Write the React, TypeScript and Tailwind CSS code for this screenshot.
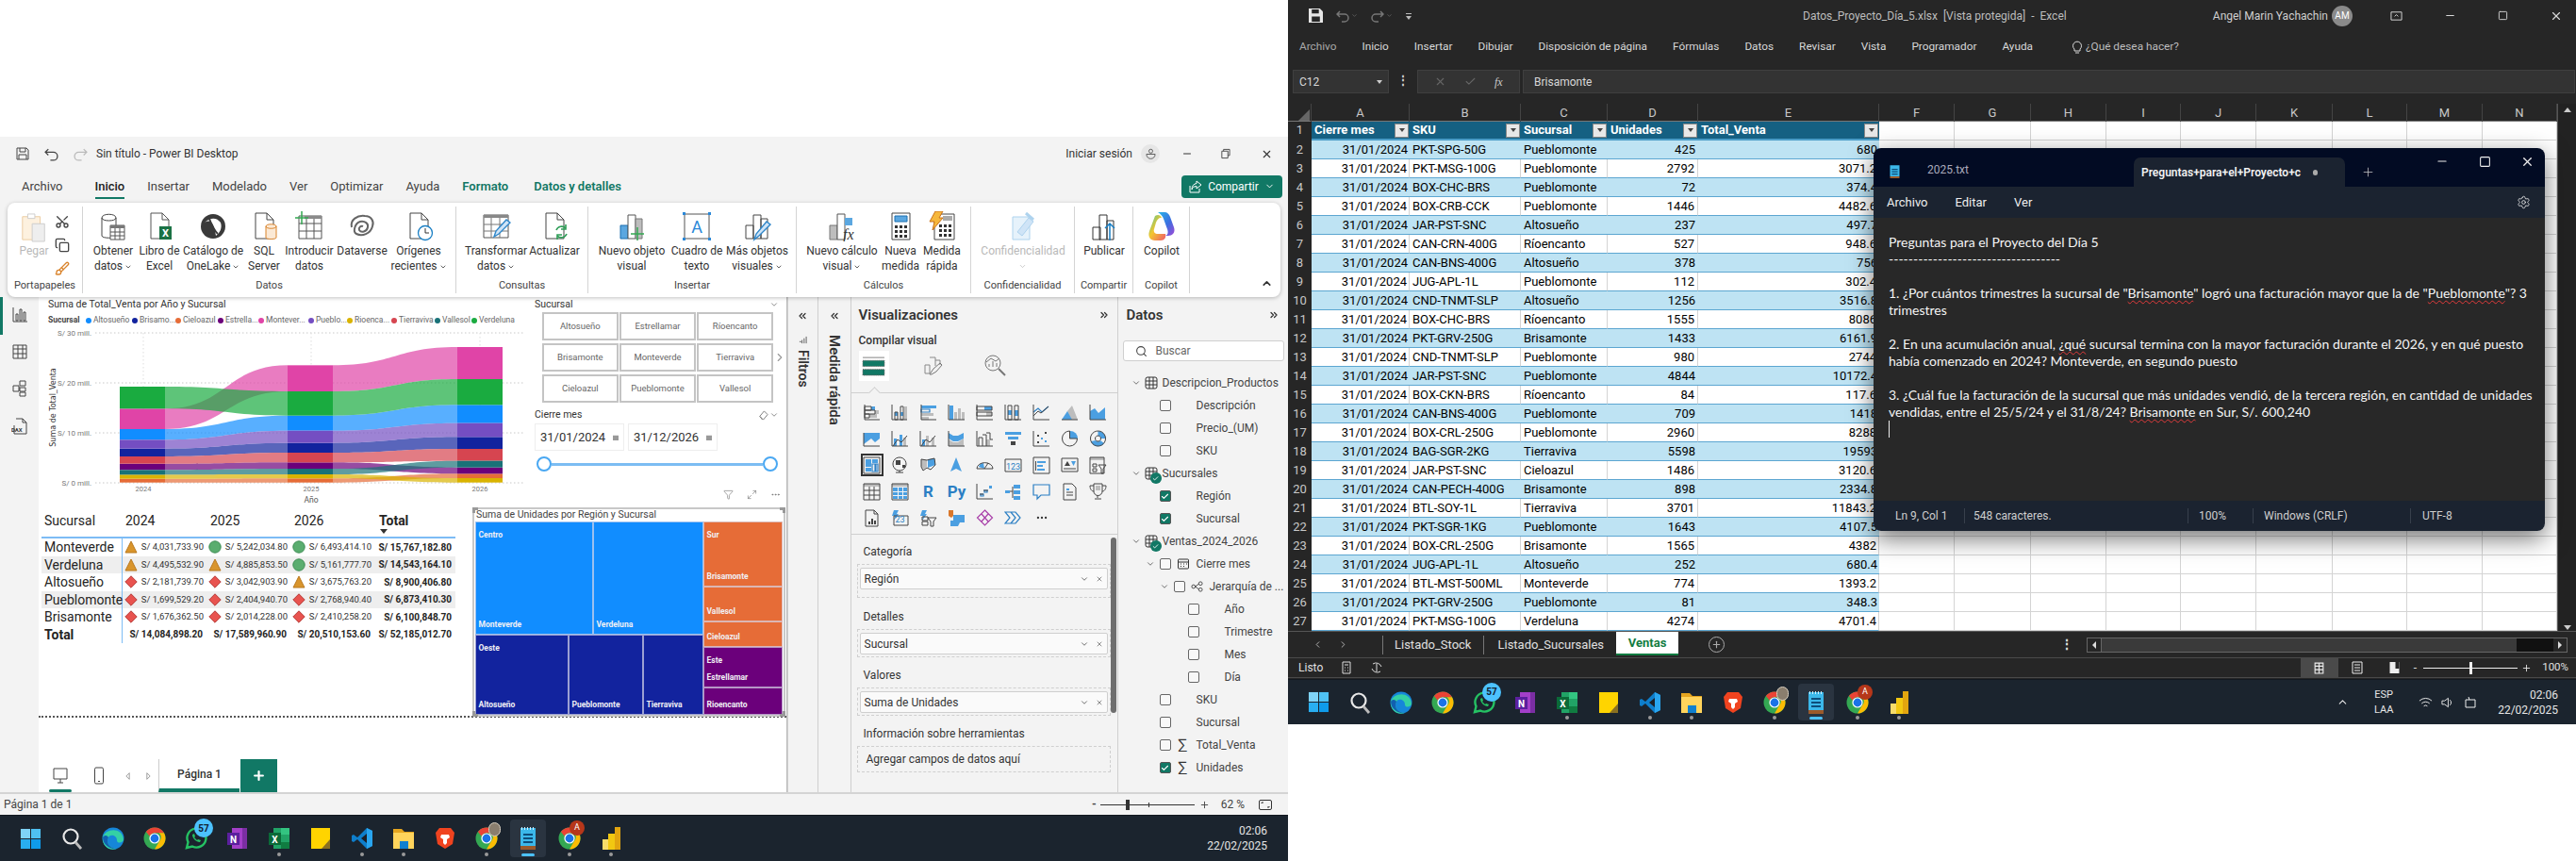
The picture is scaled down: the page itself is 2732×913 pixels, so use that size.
import React from 'react'
import { Scissors, Copy, Brush, X, Minus, Square, Plus, ChevronDown, ChevronRight, ChevronUp, ChevronsLeft, ChevronsRight, Search, Settings, Check, Filter, MoreHorizontal, Maximize2 } from 'lucide-react'

const Chev = () => <ChevronDown size={8} strokeWidth={2.5} className="inline ml-[2px] text-[#444]" />

/* ---------- ribbon icons ---------- */
const DOC = 'M7 2h12l7 7v20H7zM19 2v7h7'
const Ic = ({ children }: { children: React.ReactNode }) => <svg viewBox="0 0 32 32" className="w-[32px] h-[32px]" fill="none">{children}</svg>

const RIcons: Record<string, React.ReactNode> = {
  get: <Ic><path d="M4 7c0-5 15-5 15 0v19c0 3-15 3-15 0z" stroke="#444" fill="#fff" /><path d="M4 7c0 4 15 4 15 0" stroke="#444" /><path d="M13 15h15v15H13z" fill="#fff" stroke="#555" /><path d="M13 15h15v3H13z" fill="#777" /><path d="M18 18v12M23 18v12M13 22h15M13 26h15" stroke="#555" /></Ic>,
  excel: <Ic><path d={DOC} stroke="#555" fill="#fff" /><path d="M16 16h13v14H16z" fill="#1b7245" /><text x="22.5" y="27" fontSize="11" fontWeight="700" fill="#fff" textAnchor="middle">X</text></Ic>,
  lake: <Ic><circle cx="16" cy="16" r="13" fill="#3a3a3a" /><path d="M7 12c6-4 10 0 12 14 4-3 7-8 5-14-4-5-10-6-17 0" fill="#fff" /><path d="M12 8c3 8 5 12 9 16" stroke="#3a3a3a" strokeWidth="2" /></Ic>,
  sql: <Ic><path d={DOC} stroke="#444" fill="#fff" /><path d="M18 16c0-3 11-3 11 0v12c0 2-11 2-11 0z" fill="#fbe9d5" stroke="#d9832b" /><path d="M18 16c0 3 11 3 11 0" stroke="#d9832b" /></Ic>,
  enter: <Ic><path d="M5 5h24v24H5z" stroke="#555" /><path d="M11 5h18v3H11z" fill="#8a8a8a" /><path d="M13 8v21M21 8v21M5 13h24M5 21h24" stroke="#555" /><path d="M8 0v14M1 7h14" stroke="#33a852" strokeWidth="1.5" /></Ic>,
  verse: <Ic><path d="M5 17c-2-8 6-13 14-12 7 0 10 6 8 11-2 8-11 11-17 8C6 22 8 13 14 11c5-1 9 2 8 6-1 5-7 6-9 3-1-3 2-5 4-4" stroke="#666" strokeWidth="2" /></Ic>,
  recent: <Ic><path d={DOC} stroke="#444" fill="#fff" /><circle cx="23" cy="23" r="7.5" fill="#fff" stroke="#1a7fc4" strokeWidth="1.3" /><path d="M23 18v5h4" stroke="#333" /></Ic>,
  transform: <Ic><path d="M3 4h26v24H3z" stroke="#555" fill="#fff" /><path d="M3 4h26v3H3z" fill="#888" /><path d="M11 7v21M20 7v21M3 14h26M3 21h26" stroke="#777" /><path d="M14 27l2-6L27 9l4 3-12 12z" fill="#cfe4f7" stroke="#2e86c9" strokeWidth="1.4" /></Ic>,
  refresh: <Ic><path d={DOC} stroke="#444" fill="#fff" /><path d="M18 20a6 6 0 0 1 10-2M29 24a6 6 0 0 1-10 2" stroke="#2f9e58" strokeWidth="1.6" /><path d="M28 14v5h-5M19 30v-5h5" stroke="#2f9e58" strokeWidth="1.6" /></Ic>,
  visual: <Ic><path d="M4 15h8v14H4z" fill="#5ba7e0" stroke="#1a6fb0" /><path d="M12 4h8v25h-8z" fill="#fff" stroke="#555" /><path d="M20 8h7v21h-7z" fill="#bdbdbd" stroke="#777" /><path d="M22 17v14M15 24h14" stroke="#33a852" strokeWidth="1.5" /></Ic>,
  text: <Ic><path d="M3 3h26v26H3z" stroke="#555" fill="#fff" /><path d="M1 1h3v3H1zM28 1h3v3h-3zM1 28h3v3H1zM28 28h3v3h-3z" fill="#2b88d8" /><text x="16" y="23" fontSize="18" fill="#2b88d8" textAnchor="middle">A</text></Ic>,
  more: <Ic><path d="M4 15h8v14H4zM12 4h8v25h-8zM20 8h7v21h-7z" stroke="#444" fill="#fff" /><path d="M13 30l2-6L26 11l4 3-12 12z" fill="#cfe4f7" stroke="#2e86c9" strokeWidth="1.4" /></Ic>,
  calc: <Ic><path d="M3 15h8v15H3z" fill="#bdbdbd" stroke="#777" /><path d="M11 3h8v27h-8z" fill="#fff" stroke="#555" /><path d="M19 7h8v8h-8z" fill="#5ba7e0" /><text x="17" y="30" fontFamily="Liberation Serif" fontStyle="italic" fontSize="16" fill="#333">fx</text></Ic>,
  measure: <Ic><path d="M7 2h19v28H7z" stroke="#444" fill="#fff" /><path d="M10 5h13v6H10z" fill="#5ba7e0" stroke="#1a6fb0" /><path d="M10 15h3v3h-3zM15 15h3v3h-3zM20 15h3v3h-3zM10 20h3v3h-3zM15 20h3v3h-3zM20 20h3v3h-3zM10 25h3v3h-3zM15 25h3v3h-3zM20 25h3v3h-3z" fill="#333" /></Ic>,
  quick: <Ic><path d="M8 3h21v27H8z" stroke="#444" fill="#fff" /><path d="M17 5h10v5H17z" fill="#aaa" /><path d="M13 14h3v3h-3zM18 14h3v3h-3zM23 14h3v3h-3zM13 19h3v3h-3zM18 19h3v3h-3zM23 19h3v3h-3zM13 24h3v3h-3zM18 24h3v3h-3zM23 24h3v3h-3z" fill="#333" /><path d="M9 0h8l-4 7h4L6 20l2-9H3z" fill="#f6b73c" stroke="#c9711a" /></Ic>,
  conf: <Ic><path d="M5 6h18v24H5z" stroke="#aed3ee" fill="#e6f2fb" /><path d="M10 22l12-15 5 4-12 15z" fill="#cfe4f7" stroke="#aed3ee" /><path d="M19 2l8 7" stroke="#aed3ee" strokeWidth="3" /></Ic>,
  publish: <Ic><path d="M4 17h8v13H4zM11 4h8v26h-8zM19 10h7v20h-7z" stroke="#333" fill="#fff" rx="2" /><path d="M22 31V13M17 18l5-5 5 5" stroke="#1a7fc4" strokeWidth="1.5" /></Ic>,
  copilot: (
    <Ic>
      <defs>
        <linearGradient id="cpa" x1="0" y1="0" x2="1" y2="1"><stop offset="0" stopColor="#27b5e8" /><stop offset=".55" stopColor="#3c6fe0" /><stop offset="1" stopColor="#a04ad6" /></linearGradient>
        <linearGradient id="cpb" x1="0" y1="0" x2="1" y2="1"><stop offset="0" stopColor="#3fc8a0" /><stop offset=".45" stopColor="#f3c62e" /><stop offset="1" stopColor="#ef5a6c" /></linearGradient>
      </defs>
      <path d="M12 1h7c3 0 5 2 6 5l4 11c2 6-2 9-6 9h-3c3-1 3-4 2-7l-4-11c-1-3-3-5-6-7z" fill="url(#cpa)" />
      <path d="M9 5c3-2 6-1 7 2l-1 0c-2 0-4 2-5 5l-2 7c-1 3 1 5 4 5h8c1 4-1 7-5 7H9c-5 0-8-4-6-10z" fill="url(#cpb)" />
    </Ic>
  ),
}

const RibbonBtn = ({ icon, label, w, faded }: { icon: string; label: React.ReactNode; w: string; faded?: boolean }) => (
  <div className={`${w} flex flex-col items-center pt-[5px] shrink-0`}>
    {RIcons[icon]}
    <div className={`mt-[2px] text-center leading-[16px] text-[12px] whitespace-nowrap ${faded ? 'text-[#b9b9b9]' : 'text-[#333]'}`}>{label}</div>
  </div>
)

const RibbonGroup = ({ title, w, pl, children }: { title: string; w: string; pl: string; children: React.ReactNode }) => (
  <div className={`${w} h-[92px] shrink-0 flex flex-col border-r border-[#d4d4d4]`}>
    <div className={`flex-1 flex ${pl}`}>{children}</div>
    <div className="h-[16px] leading-[16px] text-center text-[11px] text-[#444]">{title}</div>
  </div>
)

const Ribbon = () => (
  <div className="relative z-10 mx-[8px] h-[100px] w-[1350px] bg-white rounded-[8px] shadow-[0_1px_4px_rgba(0,0,0,.25)] flex py-[4px]">
    <RibbonGroup title="Portapapeles" w="w-[80px]" pl="pl-[8px]">
      <div className="w-[40px] flex flex-col items-center pt-[5px]">
        <svg viewBox="0 0 32 36" className="w-[30px] h-[34px]" fill="none"><path d="M3 6h20v26H3z" fill="#fdf1df" stroke="#eccb9f" /><path d="M9 3h8v5H9z" stroke="#ccc" fill="#fff" /><path d="M14 14h14v20H14z" fill="#eee" stroke="#ccc" /></svg>
        <div className="text-[12px] text-[#b9b9b9] leading-[16px] mt-0">Pegar</div>
      </div>
      <div className="flex flex-col items-center gap-[9px] pt-[8px] pl-[2px]">
        <Scissors size={16} className="text-[#444] -rotate-90" />
        <Copy size={16} className="text-[#444]" />
        <Brush size={16} className="text-[#d9832b]" />
      </div>
    </RibbonGroup>
    <RibbonGroup title="Datos" w="w-[396px]" pl="pl-[7px]">
      <RibbonBtn icon="get" w="w-[50px]" label={<>Obtener<br />datos<Chev /></>} />
      <RibbonBtn icon="excel" w="w-[48px]" label={<>Libro de<br />Excel</>} />
      <RibbonBtn icon="lake" w="w-[66px]" label={<>Catálogo de<br />OneLake<Chev /></>} />
      <RibbonBtn icon="sql" w="w-[42px]" label={<>SQL<br />Server</>} />
      <RibbonBtn icon="enter" w="w-[54px]" label={<>Introducir<br />datos</>} />
      <RibbonBtn icon="verse" w="w-[58px]" label="Dataverse" />
      <RibbonBtn icon="recent" w="w-[62px]" label={<>Orígenes<br />recientes<Chev /></>} />
    </RibbonGroup>
    <RibbonGroup title="Consultas" w="w-[140px]" pl="pl-[10px]">
      <RibbonBtn icon="transform" w="w-[64px]" label={<>Transformar<br />datos<Chev /></>} />
      <RibbonBtn icon="refresh" w="w-[60px]" label="Actualizar" />
    </RibbonGroup>
    <RibbonGroup title="Insertar" w="w-[221px]" pl="pl-[6px]">
      <RibbonBtn icon="visual" w="w-[80px]" label={<>Nuevo objeto<br />visual</>} />
      <RibbonBtn icon="text" w="w-[58px]" label={<>Cuadro de<br />texto</>} />
      <RibbonBtn icon="more" w="w-[70px]" label={<>Más objetos<br />visuales<Chev /></>} />
    </RibbonGroup>
    <RibbonGroup title="Cálculos" w="w-[185px]" pl="pl-[6px]">
      <RibbonBtn icon="calc" w="w-[84px]" label={<>Nuevo cálculo<br />visual<Chev /></>} />
      <RibbonBtn icon="measure" w="w-[40px]" label={<>Nueva<br />medida</>} />
      <RibbonBtn icon="quick" w="w-[48px]" label={<>Medida<br />rápida</>} />
    </RibbonGroup>
    <RibbonGroup title="Confidencialidad" w="w-[110px]" pl="pl-[0px]">
      <RibbonBtn icon="conf" faded w="w-[110px]" label={<>Confidencialidad<br /><ChevronDown size={9} className="inline text-[#bbb]" /></>} />
    </RibbonGroup>
    <RibbonGroup title="Compartir" w="w-[62px]" pl="pl-[0px]">
      <RibbonBtn icon="publish" w="w-[62px]" label="Publicar" />
    </RibbonGroup>
    <RibbonGroup title="Copilot" w="w-[60px]" pl="pl-[0px]">
      <RibbonBtn icon="copilot" w="w-[60px]" label="Copilot" />
    </RibbonGroup>
    <div className="flex-1 flex items-end justify-end pr-[8px] pb-[4px]"><ChevronUp size={13} strokeWidth={3} className="text-[#333]" /></div>
  </div>
)

/* ---------- sankey chart ---------- */
const COLORS: Record<string, string> = {
  Altosueño: '#118DFF', Brisamonte: '#12239E', Cieloazul: '#E66C37', Estrellamar: '#6B007B', Monteverde: '#E044A7',
  Pueblomonte: '#744EC2', Rioencanto: '#D9B300', Tierraviva: '#D64550', Vallesol: '#197278', Verdeluna: '#1AAB40',
}
const BANDS: [string, number[][]][] = [
  ['Altosueño', [[435, 469], [392, 440], [358, 416]]],
  ['Brisamonte', [[497, 522], [479, 510], [460, 498]]],
  ['Cieloazul', [[593, 605], [592, 605], [577, 591]]],
  ['Estrellamar', [[545, 565], [541, 561], [557, 577]]],
  ['Monteverde', [[370, 435], [232, 315], [174, 276]]],
  ['Pueblomonte', [[469, 497], [440, 479], [416, 460]]],
  ['Rioencanto', [[580, 593], [579, 592], [591, 605]]],
  ['Tierraviva', [[522, 545], [510, 541], [498, 536]]],
  ['Vallesol', [[565, 580], [561, 579], [536, 557]]],
  ['Verdeluna', [[300, 370], [315, 392], [276, 358]]],
]
const COLS = [[127, 175], [305, 353], [485, 533]]
const yy = (v: number) => 310 + v / 3

const Sankey = () => (
  <svg viewBox="41 345 520 191" className="w-[520px] h-[191px]" fill="none">
    {[353, 406, 459, 512].map((y, i) => (
      <g key={y}>
        <path d={`M101 ${y}H557`} stroke="#c8c8c8" strokeDasharray="1.5 2.5" />
        <text x="97" y={y + 3} fontSize="8" fill="#777" textAnchor="end">{['S/ 30 mill.', 'S/ 20 mill.', 'S/ 10 mill.', 'S/ 0 mill.'][i]}</text>
      </g>
    ))}
    {[152, 330, 509].map((x) => <path key={x} d={`M${x} 353V512`} stroke="#ddd" strokeDasharray="1.5 2.5" />)}
    {BANDS.map(([name, b]) => (
      <g key={name}>
        {[0, 1].map((i) => {
          const x1 = COLS[i][1], x2 = COLS[i + 1][0], m = (x1 + x2) / 2
          const [a1, a2] = b[i].map(yy), [c1, c2] = b[i + 1].map(yy)
          return <path key={i} d={`M${x1} ${a1}C${m} ${a1} ${m} ${c1} ${x2} ${c1}V${c2}C${m} ${c2} ${m} ${a2} ${x1} ${a2}Z`} fill={COLORS[name]} fillOpacity=".7" />
        })}
        {b.map((r, i) => <rect key={i} x={COLS[i][0]} y={yy(r[0])} width={COLS[i][1] - COLS[i][0]} height={(r[1] - r[0]) / 3} fill={COLORS[name]} />)}
      </g>
    ))}
    {['2024', '2025', '2026'].map((t, i) => <text key={t} x={[152, 330, 509][i]} y="521" fontSize="7.5" fill="#777" textAnchor="middle">{t}</text>)}
    <text x="330" y="533" fontSize="8.5" fill="#555" textAnchor="middle">Año</text>
    <text transform="translate(59 432) rotate(-90)" fontSize="8" fill="#333" textAnchor="middle" fontFamily="DejaVu Sans">Suma de Total_Venta</text>
  </svg>
)

const LEGEND: [string, string, string][] = [
  ['Altosueño', 'Altosueño', 'w-[49px]'], ['Brisamonte', 'Brisamo...', 'w-[46px]'], ['Cieloazul', 'Cieloazul', 'w-[45px]'],
  ['Estrellamar', 'Estrella...', 'w-[43px]'], ['Monteverde', 'Montever...', 'w-[53px]'], ['Pueblomonte', 'Pueblo...', 'w-[41px]'],
  ['Rioencanto', 'Rioenca...', 'w-[47px]'], ['Tierraviva', 'Tierraviva', 'w-[46px]'], ['Vallesol', 'Vallesol', 'w-[39px]'], ['Verdeluna', 'Verdeluna', 'w-[46px]'],
]

const ChartBlock = () => (
  <div className="w-[520px] shrink-0">
    <div className="h-[30px] pl-[10px]">
      <div className="h-[15px] leading-[15px] text-[10.5px] text-[#333]">Suma de Total_Venta por Año y Sucursal</div>
      <div className="flex items-center h-[15px] mt-[2px] text-[8.5px] text-[#666]">
        <span className="w-[40px] font-bold text-[#444]">Sucursal</span>
        {LEGEND.map(([k, t, w]) => (
          <span key={k} className={`${w} flex items-center gap-[2px] whitespace-nowrap`}>
            <i className={`w-[6px] h-[6px] rounded-full shrink-0 ${k === 'Altosueño' ? 'bg-[#118DFF]' : k === 'Brisamonte' ? 'bg-[#12239E]' : k === 'Cieloazul' ? 'bg-[#E66C37]' : k === 'Estrellamar' ? 'bg-[#6B007B]' : k === 'Monteverde' ? 'bg-[#E044A7]' : k === 'Pueblomonte' ? 'bg-[#744EC2]' : k === 'Rioencanto' ? 'bg-[#D9B300]' : k === 'Tierraviva' ? 'bg-[#D64550]' : k === 'Vallesol' ? 'bg-[#197278]' : 'bg-[#1AAB40]'}`} />
            {t}
          </span>
        ))}
      </div>
    </div>
    <Sankey />
  </div>
)

const Slicers = () => (
  <div className="w-[273px] pl-[6px] text-[#555]">
    <div className="h-[16px] flex items-center justify-between pr-[8px] text-[10.5px] text-[#333]">Sucursal <ChevronDown size={10} className="text-[#777]" /></div>
    <div className="flex items-center">
      <div className="ml-[8px] w-[245px] grid grid-cols-3 gap-[1.5px] gap-y-[3px]">
        {['Altosueño', 'Estrellamar', 'Ríoencanto', 'Brisamonte', 'Monteverde', 'Tierraviva', 'Cieloazul', 'Pueblomonte', 'Vallesol'].map((t) => (
          <div key={t} className="h-[30px] border-2 border-[#c4c4c4] flex items-center justify-center text-[9.5px] text-[#666]">{t}</div>
        ))}
      </div>
      <ChevronRight size={14} className="text-[#999] ml-0" />
    </div>
    <div className="mt-[5px] h-[16px] flex items-center justify-between pr-[8px] text-[10.5px] text-[#333]">
      Cierre mes
      <span className="flex items-center gap-[1px] text-[#777]">
        <svg viewBox="0 0 12 12" className="w-[11px] h-[11px]" fill="none" stroke="#777"><path d="M7 1l4 4-5 6-4-4zM2 7l3 4" /></svg>
        <ChevronDown size={10} />
      </span>
    </div>
    <div className="flex gap-[4px] mt-[1px]">
      {['31/01/2024', '31/12/2026'].map((d) => (
        <div key={d} className="w-[95px] h-[29px] border border-[#eee] flex items-center justify-between px-[5px] text-[13px] text-[#333]">
          {d}
          <svg viewBox="0 0 8 8" className="w-[6px] h-[6px]"><path d="M0 1h8v7H0z" fill="#999" /></svg>
        </div>
      ))}
    </div>
    <div className="mt-[6px] flex items-center ml-[2px] w-[256px]">
      <i className="w-[16px] h-[16px] rounded-full border-2 border-[#4aa8f2] bg-white shrink-0" />
      <i className="flex-1 h-[3px] bg-[#7cbdf3]" />
      <i className="w-[16px] h-[16px] rounded-full border-2 border-[#4aa8f2] bg-white shrink-0" />
    </div>
    <div className="mt-[19px] flex justify-end items-center gap-[14px] pr-[6px] text-[#777]">
      <Filter size={11} strokeWidth={1.4} />
      <Maximize2 size={11} strokeWidth={1.4} />
      <MoreHorizontal size={11} />
    </div>
  </div>
)

/* ---------- matrix + treemap ---------- */
type Mark = 't' | 'c' | 'd'
const MarkIcon = ({ m }: { m: Mark }) => (
  <svg viewBox="0 0 14 14" className="w-[14px] h-[14px] shrink-0">
    {m === 't' && <path d="M7 1l6 12H1z" fill="#d9952c" stroke="#b9791f" />}
    {m === 'c' && <circle cx="7" cy="7" r="6.2" fill="#5aad6f" stroke="#3f8d55" />}
    {m === 'd' && <path d="M7 .8L13.2 7 7 13.2.8 7z" fill="#e8534f" stroke="#b53a37" />}
  </svg>
)
const MATRIX: [string, [Mark, string][], string][] = [
  ['Monteverde', [['t', '4,031,733.90'], ['c', '5,242,034.80'], ['c', '6,493,414.10']], '15,767,182.80'],
  ['Verdeluna', [['t', '4,495,532.90'], ['t', '4,885,853.50'], ['c', '5,161,777.70']], '14,543,164.10'],
  ['Altosueño', [['d', '2,181,739.70'], ['d', '3,042,903.90'], ['t', '3,675,763.20']], '8,900,406.80'],
  ['Pueblomonte', [['d', '1,699,529.20'], ['d', '2,404,940.70'], ['d', '2,768,940.40']], '6,873,410.30'],
  ['Brisamonte', [['d', '1,676,362.50'], ['d', '2,014,228.00'], ['d', '2,410,258.20']], '6,100,848.70'],
]
const Matrix = () => (
  <div className="w-[439px] ml-[3px] mt-[2px] shrink-0 text-[#252423]">
    <div className="h-[31px] grid grid-cols-[86px_89px_89px_89px_86px] text-[14px] pt-[5px] leading-[18px]">
      <span className="pl-[3px]">Sucursal</span><span className="pl-[3px]">2024</span><span className="pl-[4px]">2025</span><span className="pl-[4px]">2026</span>
      <span className="pl-[5px] font-bold flex flex-col">Total<i className="ml-[1px] w-0 h-0 border-x-[4px] border-x-transparent border-t-[5px] border-t-[#333]" /></span>
    </div>
    <div className="border-t-2 border-[#7dbcf5]">
      {MATRIX.map(([name, vals, tot], i) => (
        <div key={name} className={`h-[18.5px] grid grid-cols-[86px_89px_89px_89px_86px] items-center ${i % 2 ? 'bg-[#eeeeee]' : ''}`}>
          <span className="pl-[3px] text-[14px] leading-[18px] border-r border-[#7dbcf5] h-full whitespace-nowrap">{name}</span>
          {vals.map(([m, v]) => (
            <span key={v} className="flex items-center justify-between pl-[2px] pr-[3px] text-[9.5px] whitespace-nowrap text-[#333]"><MarkIcon m={m} />S/ {v}</span>
          ))}
          <span className="text-right pr-[4px] text-[10px] font-bold whitespace-nowrap">S/ {tot}</span>
        </div>
      ))}
      <div className="h-[18.5px] grid grid-cols-[86px_89px_89px_89px_86px] items-center font-bold text-[10px]">
        <span className="pl-[3px] text-[14px] leading-[18px] border-r border-[#7dbcf5] h-full">Total</span>
        {['14,084,898.20', '17,589,960.90', '20,510,153.60', '52,185,012.70'].map((v) => <span key={v} className="text-right pr-[4px] whitespace-nowrap">S/ {v}</span>)}
      </div>
    </div>
  </div>
)

const Cell = ({ c, head, name, cls }: { c: string; head?: string; name: string; cls: string }) => (
  <div className={`${c} ${cls} border border-[#d6d6e8]/70 flex flex-col justify-between px-[2.5px] py-[1px] text-[8.5px] font-bold text-[#f0f0f5] whitespace-nowrap`}>
    <span className="mt-[6px]">{head ?? ''}</span><span className="mb-[2px]">{name}</span>
  </div>
)
const Treemap = () => (
  <div className="relative w-[332px] h-[222px] mt-[2px] ml-[18px] border-2 border-[#c8c8c8] shrink-0">
    <i className="absolute -left-[2px] -top-[2px] w-[6px] h-[6px] border-l-[3px] border-t-[3px] border-[#999]" />
    <i className="absolute -right-[2px] -top-[2px] w-[6px] h-[6px] border-r-[3px] border-t-[3px] border-[#999]" />
    <i className="absolute -left-[2px] -bottom-[2px] w-[6px] h-[6px] border-l-[3px] border-b-[3px] border-[#999]" />
    <i className="absolute -right-[2px] -bottom-[2px] w-[6px] h-[6px] border-r-[3px] border-b-[3px] border-[#999]" />
    <div className="h-[13px] pl-[2px] leading-[12px] text-[10.5px] text-[#444] whitespace-nowrap">Suma de Unidades por Región y Sucursal</div>
    <div className="flex h-[205px] mx-[1px]">
      <div className="w-[242px] flex flex-col">
        <div className="h-[120px] flex">
          <Cell c="bg-[#118DFF]" cls="w-[125px]" head="Centro" name="Monteverde" />
          <Cell c="bg-[#118DFF]" cls="flex-1" name="Verdeluna" />
        </div>
        <div className="flex-1 flex">
          <Cell c="bg-[#12239E]" cls="w-[99px]" head="Oeste" name="Altosueño" />
          <Cell c="bg-[#12239E]" cls="w-[79px]" name="Pueblomonte" />
          <Cell c="bg-[#12239E]" cls="flex-1" name="Tierraviva" />
        </div>
      </div>
      <div className="flex-1 flex flex-col">
        <Cell c="bg-[#E66C37]" cls="h-[69px]" head="Sur" name="Brisamonte" />
        <Cell c="bg-[#E66C37]" cls="h-[37px]" name="Vallesol" />
        <Cell c="bg-[#E66C37]" cls="h-[27px]" name="Cieloazul" />
        <Cell c="bg-[#6B007B]" cls="h-[43px]" head="Este" name="Estrellamar" />
        <Cell c="bg-[#6B007B]" cls="flex-1" name="Rioencanto" />
      </div>
    </div>
  </div>
)

/* ---------- viz gallery ---------- */
type V = { s?: string; b?: string; g?: string; l?: string; t?: string; c?: string }
const VIZ: V[] = [
  { s: 'M2 1v16h16M2 3h7v4H2zM2 7h11v4H2zM2 11h5v4H2z', b: 'M9 3h4v4H9z', g: 'M13 7h4v4h-4zM7 11h8v4H7z' },
  { s: 'M1 1v16h16M4 9h3v8H4zM10 3h3v14h-3z', b: 'M4 9h3v4H4zM10 9h3v4h-3z', g: 'M14 3h3v14h-3z' },
  { s: 'M2 1v16h16', g: 'M2 10h13v3H2zM2 14h8v3H2z', b: 'M2 2h16v3H2z', l: 'M2 6h9v3H2z' },
  { s: 'M1 1v16h17', b: 'M2 2h4v15H2z', g: 'M7 9h3v8H7zM11 5h3v12h-3zM15 9h3v8h-3z' },
  { s: 'M1 1v16h17M1 3h16v4H1zM1 9h16v4H1z', b: 'M9 3h8v4H9z', g: 'M11 9h6v4h-6z' },
  { s: 'M1 1v16h17M4 2h4v15H4zM11 2h4v15h-4z', b: 'M4 7h4v5H4zM11 7h4v6h-4z' },
  { s: 'M1 1v16h17M1 13l5-5 3 2 8-7', l: 'M1 9l5-4 4 4 7-6' },
  { s: 'M1 17h17', b: 'M1 17l6-9 5 9z', g: 'M7 8l5-6 6 15H11z' },
  { s: 'M1 1v16h17', b: 'M1 8l5-3 4 5 7-6v13H1z' },
  { s: 'M1 3v14h17', b: 'M1 3h17v6l-5 4-4-4-8 6z' },
  { s: 'M1 1v16h17M2 17l5-7 4 3 6-7', b: 'M3 9h3v8H3zM9 5h3v12H9z', g: 'M13 8h3v9h-3z' },
  { s: 'M1 1v16h17M2 17l5-7 4 3 6-7', b: 'M3 10h3v7H3z', g: 'M7 6h3v11H7zM13 8h3v9h-3z' },
  { b: 'M1 3l5 3 5 0 6-3v6l-6 3-5 0-5-3z', g: 'M1 10l5 3h5l6-4v8H1z', s: 'M1 1v16h17' },
  { s: 'M1 1v16h17M3 17V8h4v9M7 5h4v12M11 3h4v7h3', g: 'M11 10h4v7h-4z' },
  { b: 'M1 2h17v3H1zM4 7h11v3H4z', c: 'M7 12h5v4H7z' },
  { s: 'M1 1v16h17', c: 'M5 5h2v2H5zM13 2h2v2h-2zM5 12h2v2H5z', b: 'M9 8h2v2H9zM13 11h2v2h-2z' },
  { s: 'M9.5 1a8 8 0 1 0 8 8h-8z', b: 'M10 1v8h8a8 8 0 0 0-8-8z' },
  { s: 'M9.5 1a8 8 0 1 0 .01 0zM9.5 6a3 3 0 1 0 .01 0z', b: 'M9.5 1a8 8 0 0 1 8 8h-5a3 3 0 0 0-3-3zM2 12a8 8 0 0 0 14 2l-4-3a3 3 0 0 1-5 0z' },
  { s: 'M1 1h17v17H1z', b: 'M3 3h6v8H3zM3 12h6v4H3zM10 3h6v4h-6z', l: 'M10 8h3v8h-3zM14 8h2v8h-2z' },
  { s: 'M9 1a7 7 0 1 1-.01 0zM5 17h8M9 15v2', c: 'M5 4h5v5H5zM12 9h3v3h-3z' },
  { g: 'M2 3l6 1v7l-4 3-2-4z', b: 'M9 3l7-1 1 7-8 3z', s: 'M2 3l6 1 8-2 1 7-5 5-4-2-4 3-2-4z' },
  { b: 'M9 1l6 15-6-3-6 3z' },
  { s: 'M1 13a8 6 0 0 1 17 0zM9 13l4-6', b: 'M3 11a6 5 0 0 1 5-4l1 6z' },
  { s: 'M1 3h17v13H1z', t: '123' },
  { s: 'M1 1h17v17H1z', b: 'M5 5h9v2H5zM5 9h6v2H5zM5 13h8v2H5z', c: 'M3 5h1v10H3z' },
  { s: 'M1 2h17v14H1zM3 13h13', c: 'M4 10l3-5 3 5z', b: 'M11 5h5l-2.5 5z' },
  { s: 'M1 1h15v17H1zM4 8h4v3H4zM4 13h4v3H4zM10 9h8l-3 4v5h-2v-5z', g: 'M1 1h15v3H1z' },
  { s: 'M1 1h17v17H1zM7 4v14M12 4v14M1 8h17M1 13h17', g: 'M1 1h17v3H1z' },
  { s: 'M1 1h17v17H1z', b: 'M2 5h5v4H2zM8 5h4v4H8zM13 5h4v4h-4zM2 10h5v3H2zM8 10h4v3H8zM13 10h4v3h-4zM2 14h5v3H2zM8 14h4v3H8zM13 14h4v3h-4z', g: 'M1 1h17v3H1z' },
  { t: 'R' }, { t: 'Py' },
  { s: 'M1 1v16h17M4 12h4M8 8h5', l: 'M5 12h3v2H5zM9 8h3v2H9z', b: 'M14 3h3v3h-3z' },
  { b: 'M1 8h5v3H1zM10 2h7v4h-7zM10 8h7v4h-7zM10 14h7v4h-7z', s: 'M6 9h3M9 4v12' },
  { l: 'M1 2h17v11H9l-4 4v-4H1z' },
  { s: 'M3 1h9l4 4v13H3zM6 10h7M6 13h7', b: 'M6 6h3v2H6z' },
  { s: 'M5 1h9v8a4 4 0 0 1-9 0zM5 3H1c0 4 2 6 4 6M14 3h4c0 4-2 6-4 6M9 13v3M6 17h7', g: 'M7 3h5v5H7z' },
  { s: 'M3 1h9l4 4v13H3zM12 1v4h4', c: 'M6 13h2v3H6zM9 10h2v6H9zM12 12h2v4h-2z' },
  { s: 'M3 7h15v10H3z', t: '23', b: 'M3 1h5L6 5h2l-5 7 1-5H1z' },
  { s: 'M3 8h6v4H3zM3 13h6v4H3zM9 9h9l-3 4v5h-3v-5z', b: 'M3 1h5L6 5h2l-5 7 1-5H1z' },
  { b: 'M6 6h12v8h-5l-2 4H3v-6h3z', c: 'M1 1h5v6l-2 2-3-2z' },
  { l: 'M9.5 1l8 8-8 8-8-8zM6 5l7 8M13 5l-7 8' },
  { l: 'M1 3h11l5 6-5 6H1l5-6zM7 3l5 6-5 6' },
]
const VizIcon = ({ v, i }: { v: V; i: number }) => (
  <div className={`h-[28px] w-[30px] flex items-center justify-center ${i === 18 ? 'relative' : ''}`}>
    {i === 18 && <i className="absolute left-[3px] top-[2px] w-[24px] h-[24px] border-2 border-[#333]" />}
    {v.t === 'R' || v.t === 'Py' ? (
      <span className="text-[#2b7fc4] text-[17px] font-bold leading-none">{v.t}</span>
    ) : (
      <svg viewBox="0 0 19 19" className="w-[19px] h-[19px]" fill="none">
        {v.g && <path d={v.g} fill="#bdbdbd" />}
        {v.b && <path d={v.b} fill="#4b9fe1" />}
        {v.c && <path d={v.c} fill={i === 39 ? '#d9772b' : '#444'} />}
        {v.l && <path d={v.l} stroke={i === 40 ? '#a83fa8' : '#2b7fc4'} strokeWidth="1.2" />}
        {v.s && <path d={v.s} stroke="#444" />}
        {v.t && <text x="9.5" y="13.5" fontSize="9" fill="#2b7fc4" textAnchor="middle">{v.t}</text>}
      </svg>
    )}
  </div>
)

const Well = ({ label, value, h }: { label: string; value: string; h: string }) => (
  <>
    <div className="pl-[13px] h-[16px] leading-[16px] text-[12px] text-[#333]">{label}</div>
    <div className={`ml-[6px] mr-[7px] mt-[5px] ${h} border border-dashed border-[#cfcfcf] px-[2px] pt-[3px]`}>
      <div className="h-[23px] bg-[#fafafa] border border-[#cfcfcf] rounded-[2px] flex items-center justify-between px-[4px] text-[12px] text-[#333]">
        {value}
        <span className="flex items-center gap-[7px] text-[#555]"><ChevronDown size={10} /><X size={8} /></span>
      </div>
    </div>
  </>
)

const VizPane = () => (
  <div className="relative w-[284px] shrink-0 border-l border-r border-[#cfcfcf] bg-[#f3f3f3] text-[#333]">
    <div className="h-[38px] flex items-center justify-between pl-[8px] pr-[8px] text-[15px] font-semibold">Visualizaciones <ChevronsRight size={12} strokeWidth={2.5} /></div>
    <div className="h-[16px] pl-[8px] leading-[16px] text-[12px] font-medium">Compilar visual</div>
    <div className="relative h-[48px] border-b border-[#cfcfcf] flex pl-[8px] pt-[3px]">
      <div className="w-[32px] h-[32px] bg-white flex items-center justify-center">
        <svg viewBox="0 0 24 24" className="w-[25px] h-[25px]"><path d="M1 3h22" stroke="#888" /><path d="M1 6h22v6H1zM1 15h22v6H1z" fill="#117865" stroke="#666" strokeDasharray="1 1" /></svg>
      </div>
      <svg viewBox="0 0 24 24" className="ml-[35px] w-[24px] h-[24px] mt-[3px]" fill="none" stroke="#888"><path d="M3 12h5v9H3zM8 4h6v9M14 7h5v5" /><path d="M8 22l4-6 7-6 2 2-6 7-5 3z" stroke="#777" /></svg>
      <svg viewBox="0 0 24 24" className="ml-[41px] w-[24px] h-[24px] mt-[3px]" fill="none" stroke="#777"><circle cx="10" cy="10" r="8" /><path d="M16 16l7 7" strokeWidth="2" /><path d="M6 14v-3M10 14V8M14 14v-4M3 9l5-4 5 3 4-3" /></svg>
      <i className="absolute left-[20px] -bottom-[5px] w-[9px] h-[9px] rotate-45 bg-[#f3f3f3] border-l border-t border-[#cfcfcf]" />
    </div>
    <div className="pl-[7px] pt-[6px] h-[150px] border-b border-[#cfcfcf]">
      <div className="grid grid-cols-[repeat(9,30px)]">
        {VIZ.map((v, i) => <VizIcon key={i} v={v} i={i} />)}
        <div className="h-[28px] flex items-center justify-center"><MoreHorizontal size={14} className="text-[#333]" /></div>
      </div>
    </div>
    <div className="mt-[10px]" />
    <Well label="Categoría" value="Región" h="h-[36px]" />
    <div className="mt-[12px]" />
    <Well label="Detalles" value="Sucursal" h="h-[30px]" />
    <div className="mt-[11px]" />
    <Well label="Valores" value="Suma de Unidades" h="h-[30px]" />
    <div className="mt-[11px]" />
    <div className="pl-[13px] h-[16px] leading-[16px] text-[12px]">Información sobre herramientas</div>
    <div className="ml-[6px] mr-[7px] mt-[5px] h-[28px] border border-dashed border-[#cfcfcf] pl-[9px] flex items-center text-[12px]">Agregar campos de datos aquí</div>
    <i className="absolute right-[1px] top-[255px] w-[6px] h-[186px] rounded-full bg-[#6e6e6e]" />
  </div>
)

/* ---------- data tree ---------- */
const Box = ({ on }: { on?: boolean }) => on
  ? <span className="w-[12px] h-[12px] shrink-0 rounded-[2px] bg-[#117865] border border-[#555] flex items-center justify-center"><Check size={9} strokeWidth={3} className="text-white" /></span>
  : <span className="w-[12px] h-[12px] shrink-0 rounded-[2px] border border-[#666] bg-[#f8f8f8]" />

const TableRow = ({ t, ok }: { t: string; ok?: boolean }) => (
  <div className="h-[24px] pl-[14px] flex items-center">
    <ChevronDown size={10} className="text-[#555]" />
    <span className="relative ml-[4px] w-[14px] h-[14px]">
      <svg viewBox="0 0 14 14" className="w-[14px] h-[14px]" fill="none" stroke="#333"><rect x="1" y="1" width="12" height="12" rx="2" /><path d="M1 5h12M1 9h12M5 1v12M9 1v12" /></svg>
      {ok && <span className="absolute left-[6px] top-[6px] w-[12px] h-[12px] rounded-full bg-[#117865] flex items-center justify-center"><Check size={7} strokeWidth={3} className="text-white" /></span>}
    </span>
    <span className="ml-[5px]">{t}</span>
  </div>
)
const Field = ({ t, on, icon, pl, slot, chev }: { t: string; on?: boolean; icon?: React.ReactNode; pl: string; slot: string; chev?: boolean }) => (
  <div className={`h-[24px] flex items-center ${pl}`}>
    <span className="w-[15px] shrink-0">{chev && <ChevronDown size={10} className="text-[#555]" />}</span>
    <Box on={on} />
    <span className={`${slot} shrink-0 flex justify-center`}>{icon}</span>
    <span className="whitespace-nowrap">{t}</span>
  </div>
)
const Sigma = <span className="text-[16px] leading-none text-[#333] pr-[2px]">∑</span>

const DataPane = () => (
  <div className="flex-1 bg-[#f3f3f3] text-[12px] text-[#444]">
    <div className="h-[38px] flex items-center justify-between pl-[9px] pr-[9px] text-[15px] font-semibold text-[#333]">Datos <ChevronsRight size={12} strokeWidth={2.5} /></div>
    <div className="ml-[5px] mr-[4px] mt-[8px] h-[22px] bg-white border border-[#cfcfcf] rounded-[3px] flex items-center pl-[12px] text-[#666]"><Search size={13} className="text-[#444]" /><span className="ml-[9px]">Buscar</span></div>
    <div className="mt-[11px]">
      <TableRow t="Descripcion_Productos" />
      <Field pl="pl-[29px]" slot="w-[27px]" t="Descripción" />
      <Field pl="pl-[29px]" slot="w-[27px]" t="Precio_(UM)" />
      <Field pl="pl-[29px]" slot="w-[27px]" t="SKU" />
      <TableRow t="Sucursales" ok />
      <Field pl="pl-[29px]" slot="w-[27px]" t="Región" on />
      <Field pl="pl-[29px]" slot="w-[27px]" t="Sucursal" on />
      <TableRow t="Ventas_2024_2026" ok />
      <Field pl="pl-[29px]" slot="w-[27px]" t="Cierre mes" chev icon={<svg viewBox="0 0 12 12" className="w-[12px] h-[12px]" fill="none" stroke="#333"><rect x=".5" y="1" width="11" height="10" rx="1" /><path d="M.5 4h11M3 6h1M6 6h1M9 6h1M3 8.500h1M6 8.500h1" /></svg>} />
      <Field pl="pl-[44px]" slot="w-[26px]" t="Jerarquía de ..." chev icon={<svg viewBox="0 0 14 12" className="w-[13px] h-[12px]" fill="none" stroke="#444"><circle cx="3" cy="6" r="2" /><circle cx="11" cy="2.500" r="2" /><circle cx="11" cy="9.500" r="2" /><path d="M5 6l4-3M5 6l4 3" /></svg>} />
      {['Año', 'Trimestre', 'Mes', 'Día'].map((t) => <Field key={t} pl="pl-[59px]" slot="w-[27px]" t={t} />)}
      <Field pl="pl-[29px]" slot="w-[27px]" t="SKU" />
      <Field pl="pl-[29px]" slot="w-[27px]" t="Sucursal" />
      <Field pl="pl-[29px]" slot="w-[27px]" t="Total_Venta" icon={Sigma} />
      <Field pl="pl-[29px]" slot="w-[27px]" t="Unidades" on icon={Sigma} />
    </div>
  </div>
)

const SidePane = ({ w, label, filter }: { w: string; label: string; filter?: boolean }) => (
  <div className={`${w} shrink-0 border-l border-[#cfcfcf] bg-[#f3f3f3] flex flex-col items-center pt-[14px] text-[#333]`}>
    <ChevronsLeft size={12} strokeWidth={2.5} />
    {filter && <svg viewBox="0 0 10 10" className="w-[9px] h-[9px] mt-[15px]" stroke="#555"><path d="M1 7h2M4 5v4M6.500 3v6M9 1v8" /></svg>}
    <span className={`${filter ? 'mt-[6px] text-[14px]' : 'mt-[14px] text-[15px]'} [writing-mode:vertical-rl] font-semibold whitespace-nowrap`}>{label}</span>
  </div>
)

/* ---------- power bi window ---------- */
const PowerBI = () => (
  <div className="h-[719px] bg-[#f3f3f3] flex flex-col text-[#333]">
    <div className="h-[35px] flex items-center pl-[17px] pr-[16px] pt-[1px]">
      <svg viewBox="0 0 14 14" className="w-[14px] h-[14px]" fill="none" stroke="#444"><path d="M1 1h10l2 2v10H1zM4 1v4h6V1M3 13V8h8v5" /></svg>
      <svg viewBox="0 0 14 14" className="ml-[16px] w-[15px] h-[15px]" fill="none" stroke="#444" strokeWidth="1.2"><path d="M1 5h8a4 4 0 0 1 0 8H6M4 2L1 5l3 3" /></svg>
      <svg viewBox="0 0 14 14" className="ml-[16px] w-[15px] h-[15px]" fill="none" stroke="#bbb" strokeWidth="1.2"><path d="M13 5H5a4 4 0 0 0 0 8h3M10 2l3 3-3 3" /></svg>
      <span className="ml-[9px] text-[12px]">Sin título - Power BI Desktop</span>
      <span className="ml-auto text-[12px]">Iniciar sesión</span>
      <span className="ml-[9px] w-[20px] h-[20px] rounded-full bg-[#e6e6e6] flex items-center justify-center">
        <svg viewBox="0 0 12 14" className="w-[11px] h-[13px]" fill="none" stroke="#555"><circle cx="6" cy="3.500" r="2.200" /><path d="M1 7h10c0 7-10 7-10 0z" /></svg>
      </span>
      <Minus size={12} className="ml-[23px]" />
      <svg viewBox="0 0 12 12" className="ml-[29px] w-[11px] h-[12px]" fill="none" stroke="#444"><path d="M2 3h7v8H2zM4 3V1h7v7H9" /></svg>
      <X size={13} className="ml-[32px]" />
    </div>
    <div className="h-[35px] flex items-center pl-[23px] pr-[6px] gap-[24px] text-[13px] text-[#444] relative">
      <span className="mr-[10px]">Archivo</span>
      <span className="relative font-medium text-[#222]">Inicio<i className="absolute left-0 right-0 top-[21px] h-[2px] bg-[#117865]" /></span>
      <span>Insertar</span><span>Modelado</span><span>Ver</span><span>Optimizar</span><span>Ayuda</span>
      <span className="font-semibold text-[#117865]">Formato</span>
      <span className="ml-[3px] font-semibold text-[#117865]">Datos y detalles</span>
      <span className="ml-auto h-[24px] w-[107px] rounded-[4px] bg-[#117865] text-white text-[12px] flex items-center justify-center gap-[6px]">
        <svg viewBox="0 0 14 14" className="w-[14px] h-[14px]" fill="none" stroke="#fff"><path d="M1 6v7h10V9M8 1l5 4-5 4V6.500C5 6.500 3.500 8 3 10c0-4 2-6 5-6.500z" /></svg>
        Compartir<ChevronDown size={11} />
      </span>
    </div>
    <Ribbon />
    <div className="h-[525px] flex">
      <div className="relative w-[41px] shrink-0 flex flex-col items-center pt-[10px] gap-[21px] text-[#444]">
        <i className="absolute left-0 top-0 w-[3px] h-[40px] bg-[#117865]" />
        <svg viewBox="0 0 18 18" className="w-[18px] h-[18px]" fill="none" stroke="#444"><path d="M2 1v15h15M5 8h2v7H5zM9 3h2v12H9zM13 6h2v9h-2z" /></svg>
        <svg viewBox="0 0 18 18" className="w-[18px] h-[18px]" fill="none" stroke="#444"><path d="M2 2h14v14H2zM2 6h14M2 11h14M7 2v14M12 2v14" /></svg>
        <svg viewBox="0 0 18 18" className="w-[18px] h-[18px]" fill="none" stroke="#444"><path d="M9 1h6v5H9zM2 6h6v6H2zM9 8h6v4H9zM9 13h6v4H9zM8 8h1M8 10h1" /></svg>
        <svg viewBox="0 0 18 18" className="w-[18px] h-[20px]" fill="none" stroke="#444"><path d="M5 1h7l4 4v12H3V8M12 1v4h4" /><text x="0" y="15" fontSize="6" fontWeight="700" fill="#333" stroke="none">DAX</text></svg>
      </div>
      <div className="w-[793.5px] shrink-0 bg-white flex flex-col border-r border-[#bbb]">
        <div className="flex h-[221px]"><ChartBlock /><Slicers /></div>
        <div className="flex h-[225px] border-b-2 border-dotted border-[#555]"><Matrix /><Treemap /></div>
        <div className="flex-1" />
        <div className="h-[35px] flex items-stretch border-b-0">
          <div className="w-[127px] flex items-center pl-[13px]">
            <span className="relative w-[16px] flex justify-center mx-[2px]">
              <svg viewBox="0 0 16 18" className="w-[16px] h-[18px]" fill="none" stroke="#444"><path d="M1 1h14v11H1zM5 16h6M8 12v4" /></svg>
              <i className="absolute -left-[4px] -right-[4px] top-[23px] h-[3px] rounded-full bg-[#117865]" />
            </span>
            <svg viewBox="0 0 10 18" className="ml-[26px] w-[10px] h-[19px]" fill="none" stroke="#444"><rect x=".5" y=".5" width="9" height="17" rx="1.500" /><path d="M4 15h2" /></svg>
            <svg viewBox="0 0 6 10" className="ml-[23px] w-[5px] h-[10px]" fill="none" stroke="#888"><path d="M5 1L1 5l4 4z" /></svg>
            <svg viewBox="0 0 6 10" className="ml-[17px] w-[5px] h-[10px]" fill="none" stroke="#888"><path d="M1 1l4 4-4 4z" /></svg>
          </div>
          <div className="w-[86px] border-l border-[#ccc] border-b-4 border-b-[#117865] flex items-center justify-center text-[12px] font-medium text-[#333]">Página 1</div>
          <div className="w-[39px] ml-[1px] bg-[#117865] flex items-center justify-center"><Plus size={15} strokeWidth={3.5} className="text-white" /></div>
        </div>
      </div>
      <SidePane w="w-[32px]" label="Filtros" filter />
      <SidePane w="w-[35px]" label="Medida rápida" />
      <VizPane />
      <DataPane />
    </div>
    <div className="h-[24px] border-t-2 border-[#d4d4d4] flex items-center pl-[4px] pr-[17px] text-[12px] text-[#444]">
      Página 1 de 1
      <span className="ml-auto font-bold">-</span>
      <span className="relative ml-[4px] w-[100px] h-[1px] bg-[#333]">
        <i className="absolute left-[27px] -top-[5px] w-[4px] h-[11px] bg-[#333]" />
        <i className="absolute left-[51px] -top-[2px] w-[1px] h-[5px] bg-[#333]" />
      </span>
      <Plus size={11} className="ml-[5px]" />
      <span className="ml-[12px]">62 %</span>
      <svg viewBox="0 0 14 11" className="ml-[15px] w-[14px] h-[11px]" fill="none" stroke="#333"><rect x=".5" y=".5" width="13" height="10" rx="1.500" /><path d="M3 4V3h2M11 7v1H9" /></svg>
    </div>
  </div>
)

/* ---------- taskbar ---------- */
const Chrome = () => (
  <svg viewBox="0 0 24 24" className="w-[24px] h-[24px]">
    <circle cx="12" cy="12" r="11.500" fill="#34a853" />
    <path d="M12 .5a11.500 11.500 0 0 1 10 5.800H12a5.700 5.700 0 0 0-5.300 3.500L2.900 5A11.500 11.500 0 0 1 12 .5z" fill="#ea4335" />
    <path d="M22 6.300a11.500 11.500 0 0 1-10 17.200l5-8.500a5.700 5.700 0 0 0-.3-8.700z" fill="#fbbc04" />
    <circle cx="12" cy="12" r="5.600" fill="#fff" /><circle cx="12" cy="12" r="4.400" fill="#1a73e8" />
  </svg>
)
const TaskIcons: { k: string; el: React.ReactNode; dot?: boolean; active?: boolean }[] = [
  { k: 'win', el: <svg viewBox="0 0 24 24" className="w-[23px] h-[23px]"><path d="M1 1h10.500v10.500H1z" fill="#7fd3f7" /><path d="M12.500 1H23v10.500H12.500z" fill="#4fc1f2" /><path d="M1 12.500h10.500V23H1z" fill="#29aef0" /><path d="M12.500 12.500H23V23H12.500z" fill="#0f9bea" /></svg> },
  { k: 'search', el: <svg viewBox="0 0 24 24" className="w-[24px] h-[24px]" fill="none"><circle cx="11" cy="10" r="7.500" stroke="#e8e8e8" strokeWidth="2.200" /><path d="M16 16l6 7" stroke="#bbb" strokeWidth="2.800" /></svg> },
  { k: 'edge', el: <svg viewBox="0 0 24 24" className="w-[24px] h-[24px]"><circle cx="12" cy="12" r="11.500" fill="#1686d9" /><path d="M1 11C3 2 21-1 23 13c0 4-7 5-7 1 0-5-7-7-9-3-3 5 1 12 9 12-8 3-16-3-15-12z" fill="#34d0a4" /><path d="M7 11c-3 5 1 12 9 12C9 24 1 19 1 11c2-3 5-2 6 0z" fill="#1160b0" /></svg> },
  { k: 'chrome', el: <Chrome /> },
  { k: 'wa', el: <span className="relative block w-[24px] h-[24px]"><svg viewBox="0 0 24 24" className="w-[24px] h-[24px]" fill="none"><path d="M2 22l1.500-6A10 10 0 1 1 8 20.500z" stroke="#25c263" strokeWidth="2.400" /><path d="M8 8c0 4 4 8 8 8l1-2-3-1-1 1c-1-1-2-2-3-3l1-1-1-3z" fill="#25c263" /></svg><span className="absolute -right-[6px] -top-[9px] w-[20px] h-[20px] rounded-full bg-[#4cc2ff] text-[#10202e] text-[10px] font-bold flex items-center justify-center">57</span></span> },
  { k: 'one', el: <svg viewBox="0 0 24 24" className="w-[24px] h-[24px]"><path d="M6 1h16v22H6z" fill="#a33fc9" /><path d="M17 1h5v22h-5z" fill="#7b2ea3" /><path d="M1 6h13v13H1z" fill="#5b1f9e" /><text x="7.500" y="16.500" fontSize="10" fontWeight="700" fill="#fff" textAnchor="middle">N</text></svg> },
  { k: 'xl', dot: true, el: <svg viewBox="0 0 24 24" className="w-[24px] h-[24px]"><path d="M6 1h17v22H6z" fill="#21a366" /><path d="M14 1h9v7h-9z" fill="#33c481" /><path d="M14 16h9v7h-9z" fill="#107c41" /><path d="M1 6h13v13H1z" fill="#0b6a38" /><text x="7.500" y="16.500" fontSize="10" fontWeight="700" fill="#fff" textAnchor="middle">X</text></svg> },
  { k: 'notes', el: <svg viewBox="0 0 24 24" className="w-[24px] h-[24px]"><path d="M2 1h20v22H2z" fill="#ffd400" /><path d="M13 23l9-10v10z" fill="#8a7020" /></svg> },
  { k: 'vs', dot: true, el: <svg viewBox="0 0 24 24" className="w-[24px] h-[24px]"><path d="M17 1l6 3v16l-6 3-10-10-4 3-2-1V9l2-1 4 3z" fill="#0e7ecb" /><path d="M17 7l-6 5 6 5z" fill="#1b1f27" /><path d="M17 1l6 3v16l-6 3z" fill="#29a5ef" /></svg> },
  { k: 'folder', dot: true, el: <svg viewBox="0 0 24 24" className="w-[24px] h-[24px]"><path d="M1 2h9l3 3h10v18H1z" fill="#e5a51f" /><path d="M1 6h22v17H1z" fill="#ffd45c" /><path d="M8 15h9v8H8z" fill="#0f80d0" /></svg> },
  { k: 'brave', el: <svg viewBox="0 0 24 24" className="w-[24px] h-[24px]"><path d="M6 1h12l4 5-2 12-8 5-8-5L2 6z" fill="#f0431f" /><path d="M8 8h8l1 3-3 2v4l-2 2-2-2v-4l-3-2z" fill="#fff" /></svg> },
  { k: 'chrome2', dot: true, el: <span className="relative block w-[24px] h-[24px]"><Chrome /><span className="absolute -right-[3px] -top-[5px] w-[13px] h-[15px] rounded-full bg-[#8a7e6e] border border-[#d8cfc0]" /></span> },
  { k: 'note', active: true, el: <svg viewBox="0 0 24 24" className="w-[24px] h-[26px]"><path d="M4 1h16v19H4z" fill="#3cb8ea" /><path d="M4 20h16v4H4z" fill="#9b5a2b" /><path d="M7 7h10v2H7zM7 11h10v2H7zM7 15h10v2H7z" fill="#0d4d7a" /><path d="M5 0h1v3H5zM8 0h1v3H8zM11 0h1v3h-1zM14 0h1v3h-1zM17 0h1v3h-1z" fill="#cfeefc" /></svg> },
  { k: 'chrome3', dot: true, el: <span className="relative block w-[24px] h-[24px]"><Chrome /><span className="absolute -right-[4px] -top-[7px] w-[16px] h-[16px] rounded-full bg-[#b6371a] text-white text-[9px] flex items-center justify-center">A</span></span> },
  { k: 'pbi', dot: true, el: <svg viewBox="0 0 24 24" className="w-[24px] h-[26px]"><path d="M16 0h6v24h-6z" fill="#e2a50f" /><path d="M9 7h7v17H9z" fill="#f2c811" /><path d="M3 13h6v11H3z" fill="#f7dc6a" /></svg> },
]
const Taskbar = ({ h, tray }: { h: string; tray?: boolean }) => (
  <div className={`${h} shrink-0 bg-[#1b242e] flex items-center pl-[10px] pr-[20px] border-t border-[#12181f] text-[#e6e6e6]`}>
    {TaskIcons.map((t) => (
      <div key={t.k} className={`relative w-[44px] h-full flex items-center justify-center ${t.active ? 'before:content-[""] before:absolute before:left-[3px] before:right-[3px] before:top-[4px] before:bottom-[4px] before:rounded-[4px] before:bg-[#2a3440]' : ''}`}>
        <span className="relative">{t.el}</span>
        {t.dot && <i className="absolute left-1/2 -translate-x-1/2 bottom-[5px] w-[4px] h-[4px] rounded-full bg-[#9a9a9a]" />}
        {t.active && <i className="absolute left-1/2 -translate-x-1/2 bottom-[5px] w-[14px] h-[3px] rounded-full bg-[#4cc2ff]" />}
      </div>
    ))}
    {tray && (
      <div className="ml-auto flex items-center text-[11px]">
        <ChevronUp size={13} className="mr-[22px]" />
        <span className="w-[30px] text-center leading-[16px] mr-[22px]">ESP<br />LAA</span>
        <svg viewBox="0 0 16 14" className="w-[15px] h-[14px] mr-[9px]" fill="none" stroke="#eee"><path d="M1 5a10 10 0 0 1 14 0M3.500 8a6.500 6.500 0 0 1 9 0M6 11a3 3 0 0 1 4 0" /></svg>
        <svg viewBox="0 0 14 14" className="w-[13px] h-[14px] mr-[11px]" fill="none" stroke="#eee"><path d="M1 5h3l4-3v10L4 9H1zM10 4a4 4 0 0 1 0 6" /></svg>
        <svg viewBox="0 0 14 14" className="w-[14px] h-[14px]" fill="none" stroke="#eee"><path d="M2 4h10v8H2zM6 4L5 1" /></svg>
      </div>
    )}
    <div className={`${tray ? 'ml-[22px] -mr-[1px]' : 'ml-auto mr-[2px]'} text-right text-[12px] leading-[16px]`}>02:06<br />22/02/2025</div>
  </div>
)

/* ---------- excel ---------- */
const ROWS: [string, string, string, string][] = [
  ['PKT-SPG-50G', 'Pueblomonte', '425', '680'], ['PKT-MSG-100G', 'Pueblomonte', '2792', '3071.2'], ['BOX-CHC-BRS', 'Pueblomonte', '72', '374.4'],
  ['BOX-CRB-CCK', 'Pueblomonte', '1446', '4482.6'], ['JAR-PST-SNC', 'Altosueño', '237', '497.7'], ['CAN-CRN-400G', 'Ríoencanto', '527', '948.6'],
  ['CAN-BNS-400G', 'Altosueño', '378', '756'], ['JUG-APL-1L', 'Pueblomonte', '112', '302.4'], ['CND-TNMT-SLP', 'Altosueño', '1256', '3516.8'],
  ['BOX-CHC-BRS', 'Ríoencanto', '1555', '8086'], ['PKT-GRV-250G', 'Brisamonte', '1433', '6161.9'], ['CND-TNMT-SLP', 'Pueblomonte', '980', '2744'],
  ['JAR-PST-SNC', 'Pueblomonte', '4844', '10172.4'], ['BOX-CKN-BRS', 'Ríoencanto', '84', '117.6'], ['CAN-BNS-400G', 'Pueblomonte', '709', '1418'],
  ['BOX-CRL-250G', 'Pueblomonte', '2960', '8288'], ['BAG-SGR-2KG', 'Tierraviva', '5598', '19593'], ['JAR-PST-SNC', 'Cieloazul', '1486', '3120.6'],
  ['CAN-PECH-400G', 'Brisamonte', '898', '2334.8'], ['BTL-SOY-1L', 'Tierraviva', '3701', '11843.2'], ['PKT-SGR-1KG', 'Pueblomonte', '1643', '4107.5'],
  ['BOX-CRL-250G', 'Brisamonte', '1565', '4382'], ['JUG-APL-1L', 'Altosueño', '252', '680.4'], ['BTL-MST-500ML', 'Monteverde', '774', '1393.2'],
  ['PKT-GRV-250G', 'Pueblomonte', '81', '348.3'], ['PKT-MSG-100G', 'Verdeluna', '4274', '4701.4'],
]
const GRID = 'grid grid-cols-[25px_104px_118px_92px_96px_192px_80px_81px_80px_79px_80px_81px_79px_80px_79px]'
const Empty = () => <>{Array.from({ length: 9 }).map((_, i) => <div key={i} className="border-r border-b border-[#d4d4d4]" />)}</>

const HeadCell = ({ t }: { t: string }) => (
  <div className="bg-[#156082] border-b-2 border-[#4a9cc7] flex items-center justify-between pl-[3px] pr-[1px] text-white font-bold">
    {t}
    <span className="w-[15px] h-[15px] bg-[#e8e8e8] border border-[#888] flex items-center justify-center"><i className="w-0 h-0 border-x-[3px] border-x-transparent border-t-[4px] border-t-[#444]" /></span>
  </div>
)

const Excel = () => (
  <div className="h-[720px] bg-[#262626] flex flex-col text-[#d8d8d8]">
    <div className="h-[33px] flex items-center pl-[22px] text-[12px] whitespace-nowrap">
      <svg viewBox="0 0 14 14" className="w-[15px] h-[15px] shrink-0"><path d="M0 0h11l3 3v11H0z" fill="#e6e6e6" /><path d="M3 1h7v4H3zM3 8h8v5H3z" fill="#262626" /></svg>
      <svg viewBox="0 0 14 14" className="ml-[14px] w-[14px] h-[14px] shrink-0" fill="none" stroke="#777" strokeWidth="1.500"><path d="M1 5h8a4 4 0 0 1 0 8H6M4 2L1 5l3 3" /></svg>
      <ChevronDown size={7} className="ml-[2px] text-[#777] shrink-0" />
      <svg viewBox="0 0 14 14" className="ml-[14px] w-[14px] h-[14px] shrink-0" fill="none" stroke="#777" strokeWidth="1.500"><path d="M13 5H5a4 4 0 0 0 0 8h3M10 2l3 3-3 3" /></svg>
      <ChevronDown size={7} className="ml-[2px] text-[#777] shrink-0" />
      <i className="ml-[14px] w-[6px] h-[7px] border-t border-[#bbb] mt-[2px] shrink-0"><b className="block w-0 h-0 mt-[2px] border-x-[3px] border-x-transparent border-t-[4px] border-t-[#bbb]" /></i>
      <span className="ml-[415px] text-[#bdbdbd] shrink-0">Datos_Proyecto_Día_5.xlsx&nbsp; [Vista protegida]&nbsp; -&nbsp; Excel</span>
      <span className="ml-auto text-[#cfcfcf] shrink-0">Angel Marin Yachachin</span>
      <span className="ml-[4px] w-[22px] h-[22px] rounded-full bg-[#8a8a8a] text-white text-[10px] flex items-center justify-center shrink-0">AM</span>
      <svg viewBox="0 0 14 14" className="ml-[40px] w-[13px] h-[13px] shrink-0" fill="none" stroke="#ddd"><path d="M1 3h12v9H1zM5 8l2-2 2 2" /></svg>
      <Minus size={13} className="ml-[44px] shrink-0" />
      <Square size={11} className="ml-[44px] shrink-0" />
      <X size={14} className="ml-[44px] mr-[14px] shrink-0" />
    </div>
    <div className="h-[33px] flex items-center pl-[12px] gap-[27px] text-[11.8px]">
      <span className="text-[#a8a8a8]">Archivo</span>
      {['Inicio', 'Insertar', 'Dibujar', 'Disposición de página', 'Fórmulas', 'Datos', 'Revisar', 'Vista', 'Programador', 'Ayuda'].map((t) => <span key={t}>{t}</span>)}
      <span className="ml-[14px] -mr-[24px]"><svg viewBox="0 0 12 14" className="w-[12px] h-[14px]" fill="none" stroke="#d8d8d8"><path d="M3 9a4.500 4.500 0 1 1 6 0v2H3zM4 13h4" /></svg></span>
      <span className="text-[#bdbdbd]">¿Qué desea hacer?</span>
    </div>
    <div className="h-[44px] flex pt-[8px] pl-[5px] text-[12px]">
      <div className="w-[102px] h-[25px] bg-[#333] border border-[#3f3f3f] flex items-center justify-between pl-[6px] pr-[6px]">C12<i className="w-0 h-0 border-x-[3px] border-x-transparent border-t-[4px] border-t-[#ccc]" /></div>
      <span className="w-[30px] text-center font-bold leading-[22px]">⋮</span>
      <div className="w-[109px] h-[25px] bg-[#333] border border-[#3f3f3f] flex items-center justify-around px-[8px] text-[#666]">
        <X size={13} /><Check size={13} /><span className="font-['Liberation_Serif',serif] italic text-[#ccc] text-[12px]">fx</span>
      </div>
      <div className="ml-[3px] w-[1116px] h-[25px] bg-[#333] border border-[#3f3f3f] flex items-center pl-[11px]">Brisamonte</div>
    </div>
    <div className="flex">
      <div className="w-[2712px] max-w-[1346px] text-[13px]">
        <div className={`${GRID} h-[19px] text-center text-[#c8c8c8] border-b border-[#777]`}>
          <div className="border-r border-[#444] flex items-end justify-end p-[1px]"><i className="w-0 h-0 border-l-[12px] border-l-transparent border-b-[12px] border-b-[#666]" /></div>
          {'ABCDEFGHIJKLMN'.split('').map((c) => <div key={c} className="border-r border-[#444] leading-[19px]">{c}</div>)}
        </div>
        <div className="bg-white text-black">
          <div className={`${GRID} h-[20px] leading-[18px]`}>
            <div className="bg-[#262626] text-[#c8c8c8] text-center">1</div>
            <HeadCell t="Cierre mes" /><HeadCell t="SKU" /><HeadCell t="Sucursal" /><HeadCell t="Unidades" /><HeadCell t="Total_Venta" />
            <Empty />
          </div>
          {ROWS.map(([sku, suc, u, tot], i) => (
            <div key={i} className={`${GRID} h-[20px] leading-[19px]`}>
              <div className="bg-[#262626] text-[#c8c8c8] text-center">{i + 2}</div>
              {[['text-right pr-[2px]', '31/01/2024'], ['pl-[3px]', sku], ['pl-[3px]', suc], ['text-right pr-[3px]', u], ['text-right pr-[2px]', tot]].map(([c, t], j) => (
                <div key={j} className={`${c} border-b border-[#5ca6d1] ${i % 2 === 0 ? 'bg-[#bee3f3]' : 'border-r border-r-[#d4d4d4]'} whitespace-nowrap`}>{t}</div>
              ))}
              <Empty />
            </div>
          ))}
        </div>
      </div>
      <div className="flex-1 bg-[#222] border-l border-[#555] flex flex-col justify-between items-center pb-[1px]">
        <i className="mt-[4px] w-0 h-0 border-x-[4px] border-x-transparent border-b-[5px] border-b-[#ccc]" />
        <i className="w-0 h-0 border-x-[4px] border-x-transparent border-t-[5px] border-t-[#ccc]" />
      </div>
    </div>
    <div className="h-[28px] flex items-center border-t border-[#555] text-[13px] text-[#e0e0e0] shrink-0">
      <ChevronRight size={11} className="ml-[26px] rotate-180 text-[#bbb]" />
      <ChevronRight size={11} className="ml-[16px] text-[#bbb]" />
      <i className="ml-[36px] w-[1px] h-[20px] bg-[#777]" />
      <span className="ml-[12px]">Listado_Stock</span>
      <i className="ml-[13px] w-[1px] h-[20px] bg-[#777]" />
      <span className="ml-[14px]">Listado_Sucursales</span>
      <span className="ml-[13px] w-[66px] h-[25px] self-start bg-white border-b-2 border-[#117c41] text-[#117c41] font-bold flex items-center justify-center">Ventas</span>
      <span className="ml-[32px] w-[17px] h-[17px] rounded-full border border-[#aaa] flex items-center justify-center"><Plus size={11} strokeWidth={2.5} className="text-[#aaa]" /></span>
      <span className="ml-[356px] font-bold text-[14px]">⋮</span>
      <div className="ml-[14px] w-[510px] h-[16px] border border-[#666] flex items-stretch">
        <span className="w-[15px] border-r border-[#666] flex items-center justify-center"><i className="w-0 h-0 border-y-[4px] border-y-transparent border-r-[4px] border-r-[#ddd]" /></span>
        <span className="w-[440px] bg-[#3a3a3a]" />
        <span className="flex-1 bg-[#111]" />
        <span className="w-[14px] flex items-center justify-center"><i className="w-0 h-0 border-y-[4px] border-y-transparent border-l-[4px] border-l-[#ddd]" /></span>
      </div>
    </div>
    <div className="h-[22px] flex items-center border-y border-[#4a4a4a] text-[12px] text-[#e0e0e0] pl-[11px] shrink-0">
      Listo
      <svg viewBox="0 0 12 14" className="ml-[19px] w-[12px] h-[14px]" fill="none" stroke="#ddd"><path d="M2 1h8v12H2zM4 4h4M4 7h1M7 7h1M4 10h1M7 10h1" /></svg>
      <svg viewBox="0 0 14 14" className="ml-[19px] w-[14px] h-[14px]" fill="none" stroke="#ddd"><path d="M3 3a6 6 0 0 1 9 3M11 11a6 6 0 0 1-9-3M7 3v8" /></svg>
      <span className="ml-auto w-[40px] h-full bg-[#4a4a4a] flex items-center justify-center"><svg viewBox="0 0 12 12" className="w-[13px] h-[13px]" fill="none" stroke="#eee"><path d="M2 1h8v10H2zM2 4h8M2 7.500h8M6 1v10" /></svg></span>
      <svg viewBox="0 0 12 14" className="ml-[13px] w-[14px] h-[14px]" fill="none" stroke="#eee"><path d="M1 1h10v12H1zM3 4h6M3 7h6M3 10h6" /></svg>
      <svg viewBox="0 0 12 14" className="ml-[26px] w-[13px] h-[14px]"><path d="M1 1h10v12H1z" fill="#eee" /><path d="M7 1h4v7H7z" fill="#262626" /></svg>
      <span className="ml-[14px]">-</span>
      <span className="relative ml-[7px] w-[100px] h-[1px] bg-[#eee]"><i className="absolute left-[49px] -top-[6px] w-[3px] h-[13px] bg-[#eee]" /></span>
      <Plus size={11} className="ml-[4px]" />
      <span className="ml-[11px] mr-[8px] text-[11.5px]">100%</span>
    </div>
  </div>
)

/* ---------- notepad ---------- */
const Sp = ({ children }: { children: React.ReactNode }) => <span className="underline decoration-wavy decoration-[#e33b3b] decoration-1 underline-offset-2">{children}</span>

const Notepad = () => (
  <div className="absolute left-[621px] top-[157px] w-[712px] h-[406px] rounded-[8px] overflow-hidden flex flex-col shadow-[0_8px_26px_rgba(0,0,0,.55)] text-[#eee]">
    <div className="h-[41px] bg-[#020b23] flex items-end pl-[15px] text-[12px] shrink-0">
      <svg viewBox="0 0 24 24" className="w-[15px] h-[18px] mb-[7px]"><path d="M4 1h16v19H4z" fill="#3cb8ea" /><path d="M4 20h16v3H4z" fill="#9b5a2b" /><path d="M7 7h10v2H7zM7 11h10v2H7zM7 15h10v2H7z" fill="#0d4d7a" /></svg>
      <span className="ml-[27px] mb-[9px] text-[#aab]">2025.txt</span>
      <div className="ml-[175px] w-[224px] h-[31px] bg-[#1b2330] rounded-t-[7px] flex items-center pl-[8px] font-semibold text-[#f2f2f2]">Preguntas+para+el+Proyecto+c<i className="ml-[13px] w-[5px] h-[6px] rounded-full bg-[#aaa]" /></div>
      <Plus size={15} className="ml-[17px] mb-[8px] text-[#ccc]" strokeWidth={1.2} />
      <Minus size={14} className="ml-[64px] mb-[20px]" />
      <Square size={13} className="ml-[32px] mb-[20px]" />
      <X size={15} className="ml-[31px] mb-[19px]" />
    </div>
    <div className="h-[33px] bg-[#1b2330] flex items-center pl-[14px] gap-[29px] text-[13px] shrink-0">
      <span>Archivo</span><span>Editar</span><span>Ver</span>
      <Settings size={15} strokeWidth={1.3} className="ml-auto mr-[15px]" />
    </div>
    <div className="flex-1 bg-[#282828] pl-[16px] pt-[17px] font-['Lato',sans-serif] text-[14px] leading-[18px] text-[#f5f5f5] whitespace-nowrap">
      <div>Preguntas para el Proyecto del Día 5</div>
      <div>-----------------------------------</div>
      <div className="h-[18px]" />
      <div>1. ¿Por cuántos trimestres la sucursal de "<Sp>Brisamonte</Sp>" logró una facturación mayor que la de "<Sp>Pueblomonte</Sp>"? 3</div>
      <div>trimestres</div>
      <div className="h-[18px]" />
      <div>2. En una acumulación anual, <Sp>¿qué</Sp> sucursal termina con la mayor facturación durante el 2026, y en qué puesto</div>
      <div>había comenzado en 2024? Monteverde, en segundo puesto</div>
      <div className="h-[18px]" />
      <div>3. ¿Cuál fue la facturación de la sucursal que más unidades vendió, de la tercera región, en cantidad de unidades</div>
      <div>vendidas, entre el 25/5/24 y el 31/8/24? <Sp>Brisamonte</Sp> en Sur, S/. 600,240</div>
      <div className="w-[1px] h-[18px] bg-[#eee]" />
    </div>
    <div className="h-[32px] bg-[#1b2330] flex items-center text-[12px] text-[#cfcfcf] shrink-0">
      <span className="ml-[23px] w-[73px]">Ln 9, Col 1</span>
      <span className="h-[16px] w-[1px] bg-[#38404c]" />
      <span className="ml-[9px] w-[227px]">548 caracteres.</span>
      <span className="h-[16px] w-[1px] bg-[#38404c]" />
      <span className="ml-[11px] w-[57px]">100%</span>
      <span className="h-[16px] w-[1px] bg-[#38404c]" />
      <span className="ml-[11px] w-[155px]">Windows (CRLF)</span>
      <span className="h-[16px] w-[1px] bg-[#38404c]" />
      <span className="ml-[12px]">UTF-8</span>
    </div>
  </div>
)

export default function App() {
  return (
    <div className="w-[2732px] h-[913px] overflow-hidden bg-white grid grid-cols-2 font-['Roboto',sans-serif]">
      <div className="flex flex-col">
        <div className="h-[145px] shrink-0 bg-white" />
        <PowerBI />
        <Taskbar h="h-[49px]" />
      </div>
      <div className="relative flex flex-col">
        <Excel />
        <Taskbar h="h-[48px]" tray />
        <Notepad />
      </div>
    </div>
  )
}
